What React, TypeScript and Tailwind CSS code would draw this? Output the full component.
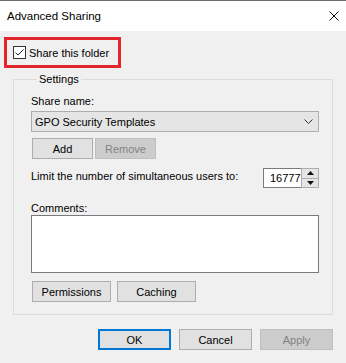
import React from "react";

function WinButton({
  label,
  width,
  disabled,
  focused,
}: {
  label: string;
  width: string;
  disabled?: boolean;
  focused?: boolean;
}) {
  let cls = "bg-[#e1e1e1] border border-[#adadad] text-black";
  if (disabled) cls = "bg-[#cccccc] border border-[#bfbfbf] text-[#838383]";
  if (focused) cls = "bg-[#e1e1e1] border-2 border-[#0078d7] text-black";
  return (
    <div className={`${width} h-[21px] flex items-center justify-center leading-[16px] ${cls}`}>
      {label}
    </div>
  );
}

export default function App() {
  return (
    <div className="w-[346px] h-[363px] overflow-hidden bg-[#f0f0f0] text-[11px] text-black font-['Liberation_Sans','Arial',sans-serif]">
      {/* title bar */}
      <div className="h-[31px] bg-white border-t border-[#6b6b6b] flex items-center justify-between pl-[7px] pr-[7px]">
        <span className="text-[11.5px] leading-[16px]">Advanced Sharing</span>
        <svg width="10" height="10" viewBox="0 0 10 10">
          <path d="M0.5 0.5L9.5 9.5M9.5 0.5L0.5 9.5" stroke="#111" strokeWidth="1" fill="none" />
        </svg>
      </div>

      {/* highlighted checkbox */}
      <div className="mt-[6px] ml-[4px] w-[117px] h-[31px] border-[3px] border-[#e3262b] flex items-center pl-[6px] gap-[3px]">
        <div className="w-[13px] h-[13px] border border-[#333333] bg-white flex items-center justify-center">
          <svg width="11" height="11" viewBox="0 0 11 11">
            <path d="M1.5 5.5L4 8L9.5 2.5" stroke="#222" strokeWidth="1" fill="none" />
          </svg>
        </div>
        <span className="leading-[16px]">Share this folder</span>
      </div>

      {/* settings group */}
      <fieldset className="mt-[3px] ml-[13px] w-[320px] border border-[#dcdcdc] pl-[17px] pr-[13px] pb-[12px]">
        <legend className="ml-[6px] px-[2px] leading-[16px]">Settings</legend>

        <div className="mt-[6px] h-[16px] leading-[16px]">Share name:</div>

        <div className="mt-[2px] h-[21px] w-[288px] bg-[#e5e5e5] border border-[#adadad] flex items-center justify-between pl-[3px] pr-[5px]">
          <span className="leading-[16px]">GPO Security Templates</span>
          <svg width="9" height="5" viewBox="0 0 9 5">
            <path d="M0.5 0.5L4.5 4.5L8.5 0.5" stroke="#333" strokeWidth="1" fill="none" />
          </svg>
        </div>

        <div className="mt-[6px] flex gap-[2px] pl-[1px]">
          <WinButton label="Add" width="w-[61px]" />
          <WinButton label="Remove" width="w-[61px]" disabled />
        </div>

        <div className="mt-[9px] flex justify-between items-start">
          <span className="leading-[16px]">Limit the number of simultaneous users to:</span>
          <div className="w-[56px] h-[20px] flex">
            <div className="flex-1 bg-white border border-r-0 border-[#7a7a7a] overflow-hidden whitespace-nowrap pl-[6px] leading-[18px]">
              16777
            </div>
            <div className="w-[18px] flex flex-col border border-[#adadad] bg-[#e5e5e5]">
              <div className="flex-1 flex items-center justify-center border-b border-[#adadad]">
                <svg width="7" height="4" viewBox="0 0 7 4">
                  <path d="M3.5 0L7 4H0Z" fill="#111" />
                </svg>
              </div>
              <div className="flex-1 flex items-center justify-center">
                <svg width="7" height="4" viewBox="0 0 7 4">
                  <path d="M0 0H7L3.5 4Z" fill="#111" />
                </svg>
              </div>
            </div>
          </div>
        </div>

        <div className="mt-[14px] h-[13px] leading-[13px]">Comments:</div>
        <div className="h-[58px] w-[288px] bg-white border border-[#7a7a7a]" />

        <div className="mt-[8px] flex gap-[6px] pl-[1px]">
          <WinButton label="Permissions" width="w-[79px]" />
          <WinButton label="Caching" width="w-[79px]" />
        </div>
      </fieldset>

      {/* dialog buttons */}
      <div className="mt-[14px] flex justify-end gap-[8px] pr-[13px]">
        <WinButton label="OK" width="w-[73px]" focused />
        <WinButton label="Cancel" width="w-[73px]" />
        <WinButton label="Apply" width="w-[73px]" disabled />
      </div>
    </div>
  );
}
